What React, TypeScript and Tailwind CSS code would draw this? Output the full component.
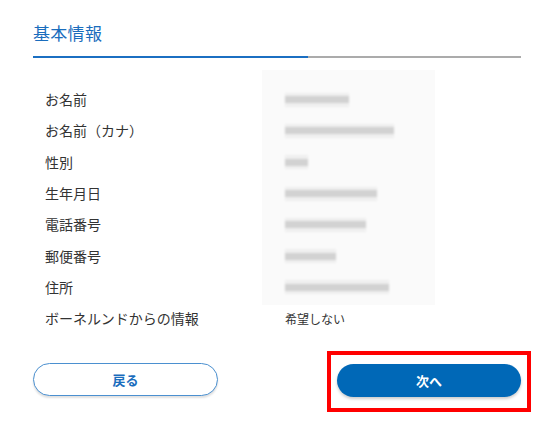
const rows = [
  { label: 'お名前', w: 64 },
  { label: 'お名前（カナ）', w: 109 },
  { label: '性別', w: 23 },
  { label: '生年月日', w: 92 },
  { label: '電話番号', w: 81 },
  { label: '郵便番号', w: 51 },
  { label: '住所', w: 104 },
]

const font = { fontFamily: '"Noto Sans CJK JP", "Noto Sans", sans-serif' }

export default function App() {
  return (
    <div className="w-[560px] h-[421px] bg-white overflow-hidden" style={font}>
      <div className="ml-[33px] w-[488px] pt-[22px]">
        {/* 見出し */}
        <h2 className="text-[17px] leading-[22px] text-[#1a6dbd] tracking-[0.3px]">基本情報</h2>

        {/* 進捗 */}
        <div className="mt-[12px] flex items-center">
          <div className="w-[275px] h-[2px] bg-[#1b6fc2]" />
          <div className="flex-1 h-[2px] bg-[#ababab]" />
        </div>

        {/* 項目 */}
        <div className="mt-[12px] flex">
          <div className="w-[252px] pl-[12px] pt-[14px]">
            {rows.map((r) => (
              <div key={r.label} className="h-[31.3px] flex items-center text-[14px] text-[#333]">
                {r.label}
              </div>
            ))}
            <div className="h-[31.3px] flex items-center text-[14px] text-[#333]">
              ボーネルンドからの情報
            </div>
          </div>

          <div className="flex-1">
            {/* ぼかし済みの値 */}
            <div className="ml-[-23px] w-[173px] pl-[23px] pt-[14px] pb-[2px] bg-[#fafafa]">
              {rows.map((r) => (
                <div key={r.label} className="h-[31.3px] flex items-center">
                  <div
                    className="h-[14px] flex items-center bg-[#efefef] blur-[1px]"
                    style={{ width: r.w }}
                  >
                    <div className="w-full h-[7px] bg-[#d2d2d2]" />
                  </div>
                </div>
              ))}
            </div>
            <div className="h-[31.3px] mt-[-2px] flex items-center text-[12px] text-[#333]">
              希望しない
            </div>
          </div>
        </div>

        {/* ボタン */}
        <div className="mt-[17px] flex justify-between items-start">
          <button className="mt-[12px] w-[185px] h-[33px] rounded-full border border-[#4b90d0] bg-white text-[13px] font-bold text-[#1a6dbd] shadow-[0_2px_2px_rgba(0,0,0,0.12)]">
            戻る
          </button>
          <div className="mr-[-10px] border-4 border-[#ff0000] px-[6px] pt-[9px] pb-[11px]">
            <button className="block w-[184px] h-[33px] rounded-full bg-[#0068b7] text-[13px] font-bold text-white shadow-[0_2px_3px_rgba(0,0,0,0.2)]">
              次へ
            </button>
          </div>
        </div>
      </div>
    </div>
  )
}
